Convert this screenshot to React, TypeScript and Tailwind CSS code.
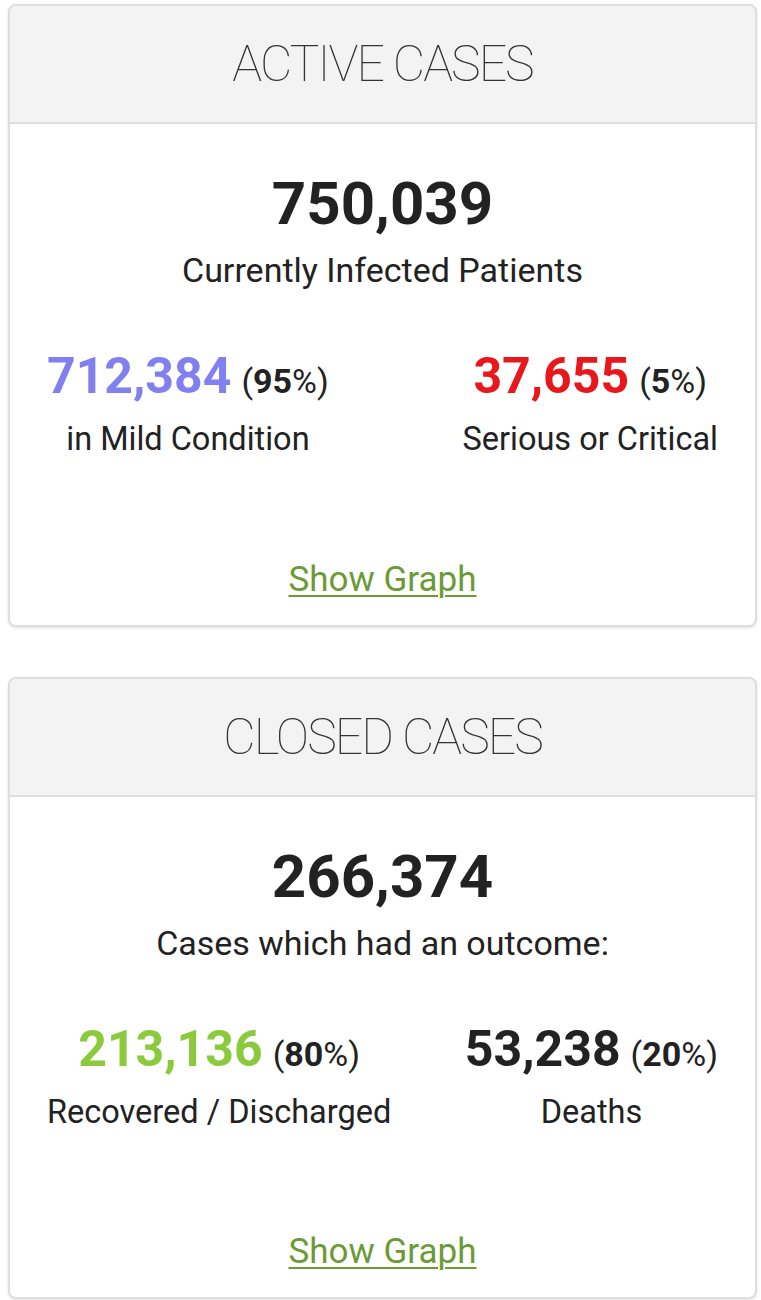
import React from 'react';

type Split = {
  value: string;
  pct: string;
  label: string;
  color: string;
};

type CaseCard = {
  title: string;
  total: string;
  caption: string;
  left: Split;
  right: Split;
};

const CARDS: CaseCard[] = [
  {
    title: 'ACTIVE CASES',
    total: '750,039',
    caption: 'Currently Infected Patients',
    left: { value: '712,384', pct: '95', label: 'in Mild Condition', color: 'text-[#8080f0]' },
    right: { value: '37,655', pct: '5', label: 'Serious or Critical', color: 'text-[#e8171b]' },
  },
  {
    title: 'CLOSED CASES',
    total: '266,374',
    caption: 'Cases which had an outcome:',
    left: { value: '213,136', pct: '80', label: 'Recovered / Discharged', color: 'text-[#8aca3c]' },
    right: { value: '53,238', pct: '20', label: 'Deaths', color: 'text-[#222222]' },
  },
];

const SplitStat: React.FC<{ s: Split }> = ({ s }) => (
  <div className="text-center">
    <div className="leading-none whitespace-nowrap">
      <span className={`text-[50px] font-bold ${s.color}`}>{s.value}</span>
      <span className="ml-[10px] text-[34px] text-[#222]">
        (<b className="font-bold">{s.pct}</b>%)
      </span>
    </div>
    <div className="mt-[22px] text-[32.5px] leading-none text-[#222] whitespace-nowrap">{s.label}</div>
  </div>
);

const Card: React.FC<{ card: CaseCard }> = ({ card }) => (
  <div className="rounded-lg border-2 border-[#dedede] bg-white shadow-[0_1px_3px_rgba(0,0,0,0.12)] overflow-hidden">
    <div className="h-[118px] bg-[#f3f3f3] border-b-2 border-[#dedede] flex items-center justify-center">
      <h2 className="text-[50px] font-thin tracking-[-2px] text-[#333] leading-none">{card.title}</h2>
    </div>
    <div className="pt-[50px] pb-[27px]">
      <div className="text-center text-[60px] font-bold leading-none text-[#222]">{card.total}</div>
      <div className="mt-[19px] text-center text-[34px] leading-none text-[#222]">{card.caption}</div>
      <div className="mt-[64px] pl-[37px] pr-[37px] flex justify-between">
        <SplitStat s={card.left} />
        <SplitStat s={card.right} />
      </div>
      <div className="mt-[106px] text-center">
        <a href="#" className="text-[35px] leading-none text-[#6c9a36] underline decoration-2 underline-offset-4">
          Show Graph
        </a>
      </div>
    </div>
  </div>
);

export default function App() {
  return (
    <div className="min-h-[1300px] bg-white pl-[8px] pr-[4px] pt-[4px] font-['Roboto',sans-serif] flex flex-col gap-[50px]">
      {CARDS.map((c) => (
        <Card key={c.title} card={c} />
      ))}
    </div>
  );
}
